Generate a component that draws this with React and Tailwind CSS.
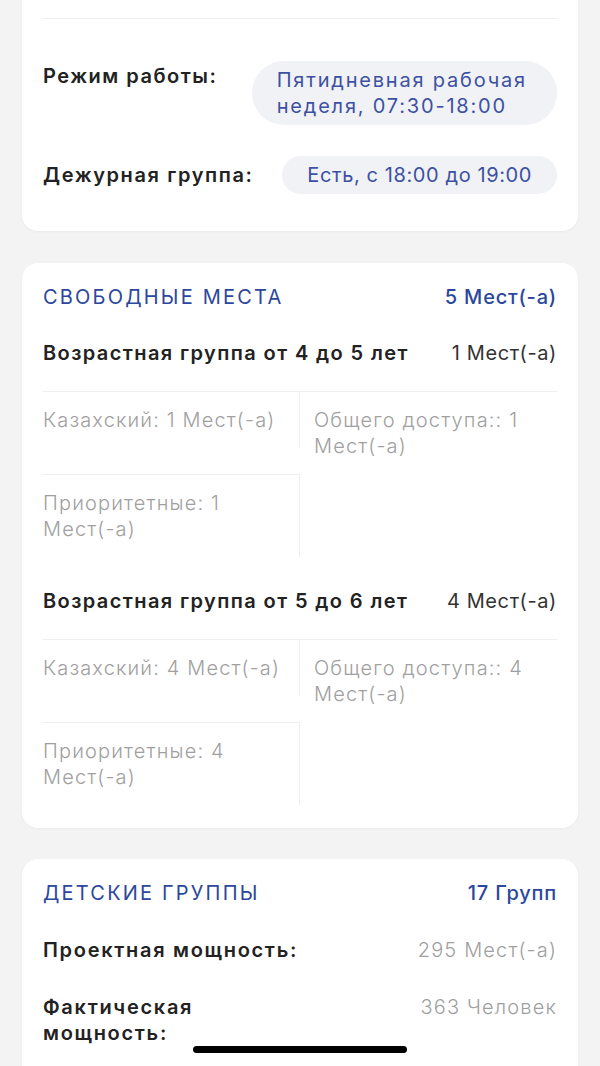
import React from 'react';

const groups = [
  {
    title: 'Возрастная группа от 4 до 5 лет',
    total: '1 Мест(-а)',
    cells: ['Казахский: 1 Мест(-а)', 'Общего доступа:: 1 Мест(-а)', 'Приоритетные: 1 Мест(-а)'],
  },
  {
    title: 'Возрастная группа от 5 до 6 лет',
    total: '4 Мест(-а)',
    cells: ['Казахский: 4 Мест(-а)', 'Общего доступа:: 4 Мест(-а)', 'Приоритетные: 4 Мест(-а)'],
  },
];

const Pill = ({ children, className = '' }) => (
  <div className={`rounded-full bg-[#f1f2f5] py-[6px] pl-[25px] text-[20px] leading-[26px] text-[#3d51a3] ${className}`}>
    {children}
  </div>
);

const App = () => {
  return (
    <div className="min-h-[1066px] bg-[#f3f3f3] px-[22px] pb-10 font-['Inter',sans-serif] text-[#222]">
      {/* Top card (cut off) */}
      <div className="rounded-b-2xl bg-white px-[21px] pb-[37px] shadow-[0_1px_3px_rgba(0,0,0,0.04)]">
        <div className="h-[18px]" />
        <div className="border-t border-[#eeeeee]" />
        <div className="mt-[42px] flex items-start justify-between">
          <div className="pt-[2px] text-[20px] font-semibold leading-[26px] tracking-[1.5px]">Режим работы:</div>
          <Pill className="pr-[30px] tracking-[1.8px]">
            Пятидневная рабочая
            <br />
            неделя, 07:30-18:00
          </Pill>
        </div>
        <div className="mt-[31px] flex items-center justify-between">
          <div className="text-[20px] font-semibold leading-[26px] tracking-[1.6px]">Дежурная группа:</div>
          <Pill className="pr-[25px] tracking-[0.6px]">Есть, с 18:00 до 19:00</Pill>
        </div>
      </div>

      {/* Free places */}
      <div className="mt-[32px] rounded-2xl bg-white px-[21px] pb-[23px] pt-[21px] shadow-[0_1px_3px_rgba(0,0,0,0.04)]">
        <div className="flex justify-between text-[20px] leading-[26px] text-[#2c479c]">
          <span className="tracking-[2.2px]">СВОБОДНЫЕ МЕСТА</span>
          <span className="font-medium tracking-[0.8px]">5 Мест(-а)</span>
        </div>
        {groups.map((g, i) => (
          <div key={i} className={i === 0 ? 'mt-[30px]' : 'mt-[31px]'}>
            <div className="flex justify-between border-b border-[#eeeeee] pb-[25px] text-[20px] leading-[26px]">
              <span className="font-semibold tracking-[1.4px]">{g.title}</span>
              <span className="tracking-[0.6px] text-[#333]">{g.total}</span>
            </div>
            <div className="flex flex-wrap items-start text-[20px] font-light leading-[26px] tracking-[1.15px] text-[#a0a0a0]">
              <div className="w-1/2 border-r border-[#eeeeee] py-[15px] pr-3">{g.cells[0]}</div>
              <div className="w-1/2 py-[15px] pl-[14px] pr-3">{g.cells[1]}</div>
              <div className="w-1/2 border-r border-t border-[#eeeeee] py-[15px] pr-3">{g.cells[2]}</div>
            </div>
          </div>
        ))}
      </div>

      {/* Child groups */}
      <div className="mt-[31px] rounded-2xl bg-white px-[21px] pb-[40px] pt-[21px] shadow-[0_1px_3px_rgba(0,0,0,0.04)]">
        <div className="flex justify-between text-[20px] leading-[26px] text-[#2c479c]">
          <span className="tracking-[2.2px]">ДЕТСКИЕ ГРУППЫ</span>
          <span className="font-medium tracking-[0.8px]">17 Групп</span>
        </div>
        <div className="mt-[31px] flex items-start justify-between text-[20px] leading-[26px]">
          <span className="font-semibold tracking-[1.7px]">Проектная мощность:</span>
          <span className="font-light tracking-[1.15px] text-[#a0a0a0]">295 Мест(-а)</span>
        </div>
        <div className="mt-[31px] flex items-start justify-between text-[20px] leading-[26px]">
          <span className="font-semibold tracking-[1.7px]">
            Фактическая
            <br />
            мощность:
          </span>
          <span className="font-light tracking-[1.15px] text-[#a0a0a0]">363 Человек</span>
        </div>
      </div>

      {/* Home indicator */}
      <div className="fixed bottom-[13px] left-1/2 h-[7px] w-[214px] -translate-x-1/2 rounded-full bg-black" />
    </div>
  );
};

export default App;
